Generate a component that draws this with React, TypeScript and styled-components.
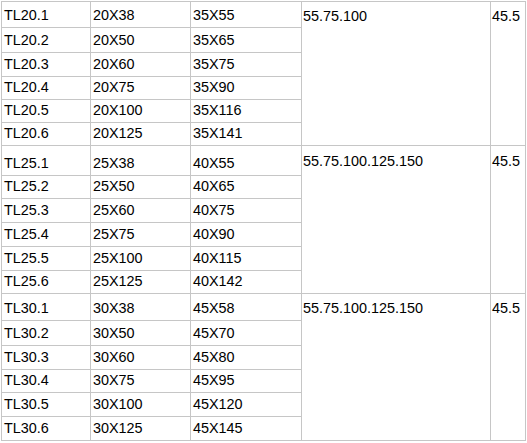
import React from "react";
import styled, { createGlobalStyle } from "styled-components";

const GlobalStyle = createGlobalStyle`
  body {
    margin: 0;
    padding: 1px 0 0 1px;
    background: #ffffff;
    color: #000000;
    font-family: "Liberation Sans", Arial, sans-serif;
  }
`;

const Sheet = styled.table`
  border-collapse: collapse;
  table-layout: fixed;
  font-size: 14.4px;
  line-height: 16px;
`;

const Col = styled.col<{ $w: number }>`
  width: ${(p) => p.$w}px;
`;

const Cell = styled.td<{ $h?: number }>`
  border: 1px solid #c6c6c6;
  padding: 0 0 4px 2px;
  vertical-align: bottom;
  white-space: nowrap;
  height: ${(p) => (p.$h ? `${p.$h - 5}px` : "auto")};
  box-sizing: content-box;
`;

const MergedCell = styled.td<{ $top: number }>`
  border: 1px solid #c6c6c6;
  padding: ${(p) => p.$top}px 0 0 1px;
  vertical-align: top;
  white-space: nowrap;
`;

type Group = {
  code: string;
  inner: string[];
  outer: string[];
  lengths: string;
  weight: string;
  heights: number[];
  top: number;
};

const widths = [89, 100, 111, 189, 35];

const groups: Group[] = [
  {
    code: "TL20",
    inner: ["20X38", "20X50", "20X60", "20X75", "20X100", "20X125"],
    outer: ["35X55", "35X65", "35X75", "35X90", "35X116", "35X141"],
    lengths: "55.75.100",
    weight: "45.5",
    heights: [26, 25, 24, 23, 23, 23],
    top: 6,
  },
  {
    code: "TL25",
    inner: ["25X38", "25X50", "25X60", "25X75", "25X100", "25X125"],
    outer: ["40X55", "40X65", "40X75", "40X90", "40X115", "40X142"],
    lengths: "55.75.100.125.150",
    weight: "45.5",
    heights: [30, 23, 24, 24, 24, 23],
    top: 7,
  },
  {
    code: "TL30",
    inner: ["30X38", "30X50", "30X60", "30X75", "30X100", "30X125"],
    outer: ["45X58", "45X70", "45X80", "45X95", "45X120", "45X145"],
    lengths: "55.75.100.125.150",
    weight: "45.5",
    heights: [27, 25, 24, 23, 24, 24],
    top: 6,
  },
];

export default function App() {
  return (
    <>
      <GlobalStyle />
      <Sheet>
        <colgroup>
          {widths.map((w, i) => (
            <Col key={i} $w={w} />
          ))}
        </colgroup>
        <tbody>
          {groups.map((g) =>
            g.inner.map((inner, i) => (
              <tr key={`${g.code}-${i}`}>
                <Cell $h={g.heights[i]}>{`${g.code}.${i + 1}`}</Cell>
                <Cell $h={g.heights[i]}>{inner}</Cell>
                <Cell $h={g.heights[i]}>{g.outer[i]}</Cell>
                {i === 0 && (
                  <>
                    <MergedCell rowSpan={6} $top={g.top}>
                      {g.lengths}
                    </MergedCell>
                    <MergedCell rowSpan={6} $top={g.top}>
                      {g.weight}
                    </MergedCell>
                  </>
                )}
              </tr>
            ))
          )}
        </tbody>
      </Sheet>
    </>
  );
}
